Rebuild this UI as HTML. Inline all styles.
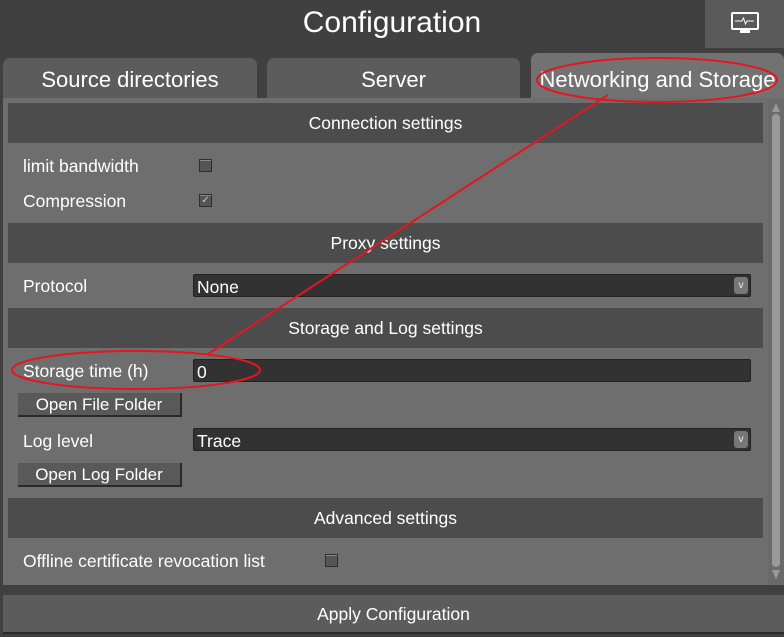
<!DOCTYPE html>
<html><head><style>
body{margin:0;width:784px;height:637px;background:#404040;position:relative;overflow:hidden;font-family:"Liberation Sans",sans-serif;color:#fff}
.a{position:absolute}
.hdr{left:8px;width:755px;height:40px;background:#4c4c4c;text-align:center;line-height:41px;font-size:17.5px}
.lbl{left:23px;font-size:17.5px;line-height:20px}
.cb{width:11px;height:11px;background:#555;border:1px solid #2e2e2e;box-shadow:inset 0 1px 0 #888}
.inp{left:193px;width:558px;height:23px;background:#323232;border:1px solid #222;border-radius:2px;font-size:17.5px;line-height:25px;padding-left:3px;box-sizing:border-box}
.btn{left:18px;width:164px;height:24px;background:#595959;border-bottom:2px solid #2a2a2a;border-right:2px solid #2a2a2a;box-sizing:border-box;text-align:center;font-size:17px;line-height:24px}
.arr{right:2px;top:2px;width:14px;height:17px;background:#777;border-radius:3px;font-size:10px;line-height:17px;text-align:center;color:#eee}
.tab{top:58px;height:42px;background:#5c5c5c;border-radius:7px 7px 0 0;text-align:center;font-size:22px;line-height:44px}
</style></head><body>
<div class="a" style="left:0;top:0;width:784px;height:48px;text-align:center;font-size:30px;line-height:46px">Configuration</div>
<div class="a" style="left:705px;top:0;width:79px;height:48px;background:#5a5a5a">
<svg class="a" style="left:25px;top:11px" width="30" height="24" viewBox="0 0 30 24"><rect x="1" y="1" width="28" height="18" rx="2" fill="#fff"/><rect x="3" y="3" width="24" height="14" fill="#5a5a5a"/><polyline points="5,10 12,10 13.5,7 15.5,13 17,10 24,10" fill="none" stroke="#fff" stroke-width="1"/><rect x="10" y="19" width="10" height="3" fill="#fff"/></svg></div>
<div class="a tab" style="left:3px;width:254px">Source directories</div>
<div class="a tab" style="left:267px;width:253px">Server</div>
<div class="a tab" style="left:531px;width:253px;top:53px;height:47px;background:#727272;line-height:54px">Networking and Storage</div>
<div class="a" style="left:3px;top:98px;width:781px;height:487px;background:#6e6e6e"></div>
<div class="a" style="left:768px;top:100px;width:16px;height:485px;background:#6a6a6a"></div>
<div class="a" style="left:772px;top:114px;width:8px;height:453px;background:#9a9a9a;border-radius:4px"></div>
<svg class="a" style="left:770px;top:102px" width="12" height="480"><polygon points="6,1 10,10 2,10" fill="#999"/><polygon points="6,477 10,468 2,468" fill="#999"/></svg>
<div class="a hdr" style="top:103px">Connection settings</div>
<div class="a lbl" style="top:156px">limit bandwidth</div><div class="a cb" style="left:199px;top:159px"></div>
<div class="a lbl" style="top:191px">Compression</div><div class="a cb" style="left:199px;top:194px;font-size:10px;line-height:11px;text-align:center;color:#ccc">✓</div>
<div class="a hdr" style="top:223px">Proxy settings</div>
<div class="a lbl" style="top:276px">Protocol</div>
<div class="a inp" style="top:274px">None<div class="a arr">v</div></div>
<div class="a hdr" style="top:308px">Storage and Log settings</div>
<div class="a lbl" style="top:361px">Storage time (h)</div>
<div class="a inp" style="top:359px">0</div>
<div class="a btn" style="top:393px">Open File Folder</div>
<div class="a lbl" style="top:431px">Log level</div>
<div class="a inp" style="top:428px">Trace<div class="a arr">v</div></div>
<div class="a btn" style="top:463px">Open Log Folder</div>
<div class="a hdr" style="top:498px">Advanced settings</div>
<div class="a lbl" style="top:551px">Offline certificate revocation list</div><div class="a cb" style="left:325px;top:554px"></div>
<div class="a" style="left:3px;top:595px;width:781px;height:37px;background:#5c5c5c;border-bottom:2px solid #2a2a2a;text-align:center;font-size:17.5px;line-height:39px">Apply Configuration</div>
<svg class="a" style="left:0;top:0" width="784" height="637"><g fill="none" stroke="#e8141e" stroke-width="2"><ellipse cx="657" cy="80" rx="120" ry="22"/><ellipse cx="136" cy="370" rx="124" ry="19"/><line x1="608" y1="95" x2="208" y2="354"/></g></svg>
</body></html>
